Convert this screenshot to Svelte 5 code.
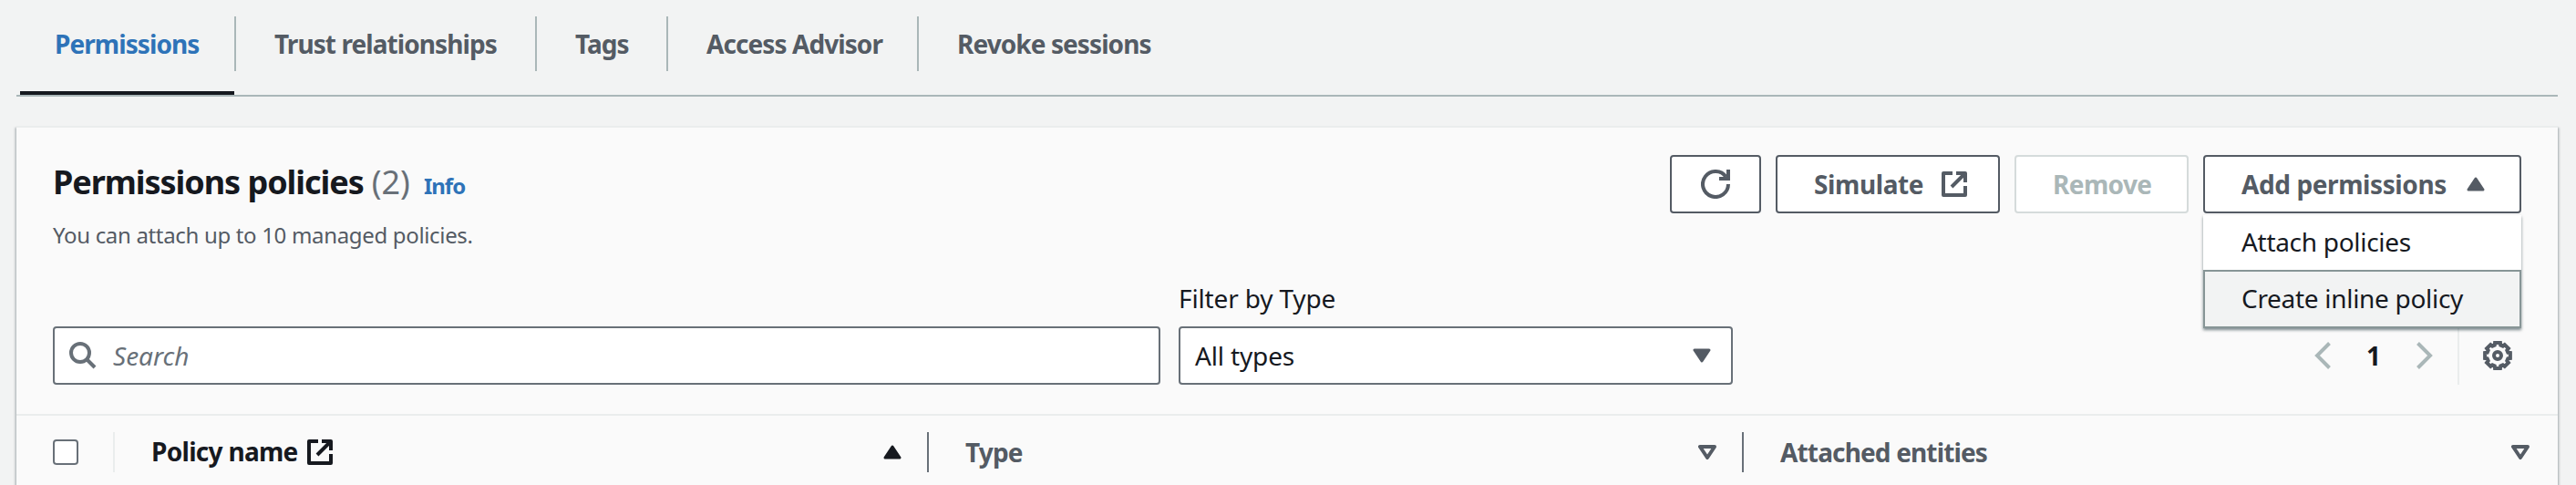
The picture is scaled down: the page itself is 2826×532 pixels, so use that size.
<script>
  const tabs = [
    { label: 'Permissions', active: true },
    { label: 'Trust relationships' },
    { label: 'Tags' },
    { label: 'Access Advisor' },
    { label: 'Revoke sessions' },
  ];

  const actions = ['Attach policies', 'Create inline policy'];
  let highlighted = 1;
  let search = '';

  // eight teeth, four corners each
  const gearPoints = () => {
    const points = [];
    for (let i = 0; i < 8; i++) {
      for (const [offset, radius] of [
        [-16, 11.8],
        [-12, 14.2],
        [12, 14.2],
        [16, 11.8],
      ]) {
        const angle = ((i * 45 + offset) * Math.PI) / 180;
        points.push(
          `${(16 + radius * Math.cos(angle)).toFixed(2)},${(16 + radius * Math.sin(angle)).toFixed(2)}`
        );
      }
    }
    return points.join(' ');
  };
</script>

{#snippet external()}
  <svg class="icon-external" width="28" height="28" viewBox="0 0 28 28">
    <path d="M12 2H2v24h24V16M16 2h10v10M26 2L11 17" />
  </svg>
{/snippet}

{#snippet caret(kind)}
  <svg class="caret {kind}" width="20" height="16" viewBox="0 0 20 16">
    <path d="M2 14L10 2l8 12z" />
  </svg>
{/snippet}

<nav class="tabs">
  {#each tabs as tab}
    <div class="tab" class:active={tab.active}>
      <span class="tab-label">{tab.label}</span>
    </div>
  {/each}
</nav>

<section class="panel">
  <header class="header">
    <div>
      <h2 class="title">
        <span class="title-text">Permissions policies</span>
        <span class="count">(2)</span>
        <span class="info">Info</span>
      </h2>
      <p class="description">You can attach up to 10 managed policies.</p>
    </div>
    <div class="actions">
      <button class="btn btn-refresh" aria-label="Refresh">
        <svg width="32" height="32" viewBox="0 0 32 32">
          <path d="M30 16A14 14 0 1 1 27.500 8M30 0v10H20" />
        </svg>
      </button>
      <button class="btn btn-simulate"><span>Simulate</span>{@render external()}</button>
      <button class="btn btn-remove" disabled><span>Remove</span></button>
      <div class="dropdown">
        <button class="btn btn-add"><span>Add permissions</span>{@render caret('up')}</button>
        <ul class="menu">
          {#each actions as action, i}
            <li class="menu-item" class:highlighted={i === highlighted}>{action}</li>
          {/each}
        </ul>
      </div>
    </div>
  </header>

  <div class="filters">
    <div class="search">
      <svg width="30" height="30" viewBox="0 0 30 30">
        <circle cx="12" cy="12" r="10" />
        <path d="M19 19l9 9" />
      </svg>
      <input class="search-input" type="text" placeholder="Search" bind:value={search} />
    </div>
    <div class="filter-type">
      <span class="filter-label">Filter by Type</span>
      <div class="select"><span>All types</span>{@render caret('down')}</div>
    </div>
    <div class="pagination">
      <svg class="arrow" width="18" height="30" viewBox="0 0 18 30">
        <path d="M16.500 1.500L3 15l13.500 13.500" />
      </svg>
      <span class="page">1</span>
      <svg class="arrow" width="18" height="30" viewBox="0 0 18 30">
        <path d="M1.500 1.500L15 15 1.500 28.500" />
      </svg>
      <div class="settings">
        <svg width="32" height="32" viewBox="0 0 32 32">
          <polygon points={gearPoints()} />
          <circle cx="16" cy="16" r="4" />
        </svg>
      </div>
    </div>
  </div>

  <div class="table-head">
    <div class="cell cell-check"><span class="checkbox"></span></div>
    <div class="cell cell-name">
      <span class="name-label">Policy name</span>
      {@render external()}
      {@render caret('up')}
    </div>
    <div class="cell"><span>Type</span>{@render caret('outline')}</div>
    <div class="cell cell-entities"><span>Attached entities</span>{@render caret('outline')}</div>
  </div>
</section>

<style>
  :global(body) {
    background: #f2f3f3;
    color: #16191f;
    font-family: 'Noto Sans', 'Open Sans', sans-serif;
    font-size: 28px;
    line-height: 40px;
    overflow: hidden;
  }

  svg {
    display: block;
    flex: none;
    fill: none;
    stroke: currentColor;
    stroke-width: 4;
  }

  .tabs {
    display: grid;
    grid-template-columns: 241px 330px 144px 275px 300px;
    box-sizing: border-box;
    height: 106px;
    margin: 0 20px 0 18px;
    border-bottom: 2px solid #aab7b8;
  }

  .tab {
    padding-top: 18px;
    height: 82px;
    color: #545b64;
    font-weight: 700;
    letter-spacing: -0.92px;
    white-space: nowrap;
  }

  .tab-label {
    display: block;
    box-sizing: border-box;
    height: 60px;
    padding: 10px 0 0 42px;
    border-right: 2px solid #aab7b8;
  }

  .tab:last-child .tab-label {
    border-right: none;
  }

  .tab.active {
    margin-left: 4px;
    background: linear-gradient(#16191f, #16191f) 0 100% / 235px 4px no-repeat;
    height: 86px;
    color: #2e73b8;
  }

  .tab.active .tab-label {
    padding-left: 38px;
  }

  .panel {
    box-sizing: border-box;
    height: 394px;
    margin: 32px 20px 0 18px;
    background: #fafafa;
    border-top: 2px solid #eaeded;
    box-shadow: 0 2px 2px rgba(0, 28, 36, 0.3), 2px 2px 2px rgba(0, 28, 36, 0.15),
      -2px 2px 2px rgba(0, 28, 36, 0.15);
  }

  .header {
    display: flex;
    justify-content: space-between;
    height: 158px;
    padding: 30px 40px 0;
  }

  .title {
    display: flex;
    align-items: baseline;
    margin: 6px 0 0;
    font-size: 36px;
    line-height: 48px;
    white-space: nowrap;
  }

  .title-text {
    letter-spacing: -1.05px;
  }

  .count {
    margin-left: 9px;
    color: #687078;
    font-weight: 400;
  }

  .info {
    margin-left: 15px;
    color: #2e73b8;
    font-size: 24px;
    letter-spacing: -1px;
  }

  .description {
    margin: 12px 0 0;
    color: #545b64;
    font-size: 24px;
    letter-spacing: -0.33px;
    line-height: 36px;
  }

  .actions {
    display: flex;
    gap: 16px;
  }

  .btn {
    display: flex;
    align-items: center;
    box-sizing: border-box;
    height: 64px;
    padding: 0 40px;
    background: #fff;
    border: 2px solid #545b64;
    border-radius: 4px;
    color: #545b64;
    font: inherit;
    font-weight: 700;
    letter-spacing: -0.4px;
    white-space: nowrap;
  }

  .btn-refresh {
    width: 100px;
    padding: 0 32px;
  }

  .btn-simulate {
    width: 246px;
    justify-content: space-between;
    padding-right: 34px;
  }

  .btn-remove {
    width: 191px;
    border-color: #d5dbdb;
    color: #aab7b8;
    letter-spacing: -0.6px;
  }

  .dropdown {
    position: relative;
  }

  .btn-add {
    width: 349px;
    justify-content: space-between;
    padding-right: 38px;
  }

  .menu {
    position: absolute;
    z-index: 1;
    top: 66px;
    left: 0;
    right: 0;
    margin: 0;
    padding: 0;
    background: #fff;
    list-style: none;
    letter-spacing: -0.3px;
    box-shadow: 0 2px 3px rgba(0, 28, 36, 0.5);
  }

  .menu-item {
    box-sizing: border-box;
    height: 60px;
    padding: 9px 42px;
    white-space: nowrap;
  }

  .menu-item.highlighted {
    height: 64px;
    padding: 9px 40px;
    background: #f2f3f3;
    border: 2px solid #879596;
  }

  .icon-external,
  .caret {
    stroke-linejoin: round;
  }

  .caret.up,
  .caret.down {
    fill: currentColor;
    stroke-width: 3;
  }

  .caret.down,
  .caret.outline {
    transform: rotate(180deg);
  }

  .filters {
    display: flex;
    align-items: flex-end;
    height: 94px;
    padding: 0 40px 32px;
  }

  .search,
  .select {
    display: flex;
    align-items: center;
    box-sizing: border-box;
    height: 64px;
    background: #fff;
    border: 2px solid #687078;
    border-radius: 4px;
  }

  .search {
    width: 1215px;
    padding-left: 16px;
    color: #687078;
  }

  .search-input {
    flex: 1;
    margin-left: 18px;
    padding: 0;
    border: none;
    background: none;
    outline: none;
    font: inherit;
  }

  .search-input::placeholder {
    color: #687078;
    font-style: italic;
  }

  .filter-type {
    width: 608px;
    margin-left: 20px;
    letter-spacing: -0.15px;
  }

  .filter-label {
    display: block;
    margin-bottom: 11px;
  }

  .select {
    justify-content: space-between;
    padding: 0 22px 0 16px;
  }

  .select .caret {
    color: #545b64;
  }

  .pagination {
    display: flex;
    align-items: center;
    height: 64px;
    margin-left: auto;
  }

  .arrow {
    color: #aab7b8;
  }

  .page {
    width: 94px;
    text-align: center;
    font-weight: 700;
  }

  .settings {
    box-sizing: border-box;
    height: 64px;
    margin-left: 27px;
    padding: 16px 10px 0 26px;
    border-left: 2px solid #eaeded;
    color: #545b64;
  }

  .table-head {
    display: grid;
    grid-template-columns: 108px 893px 894px 893px;
    height: 76px;
    padding-top: 18px;
    border-top: 2px solid #eaeded;
    color: #545b64;
    font-weight: 700;
    letter-spacing: -0.85px;
  }

  .cell {
    display: flex;
    align-items: center;
    justify-content: space-between;
    box-sizing: border-box;
    height: 44px;
    padding: 0 28px 0 40px;
    border-right: 2px solid #687078;
  }

  .cell-check {
    border-color: #eaeded;
  }

  .checkbox {
    box-sizing: border-box;
    width: 28px;
    height: 28px;
    background: #fff;
    border: 2px solid #687078;
    border-radius: 4px;
  }

  .cell-name {
    color: #16191f;
    letter-spacing: -0.7px;
  }

  .cell-name .caret {
    margin-left: auto;
  }

  .name-label {
    margin-right: 10px;
    padding-bottom: 3px;
  }

  .cell-entities {
    padding-right: 31px;
    border-right: none;
  }
</style>
